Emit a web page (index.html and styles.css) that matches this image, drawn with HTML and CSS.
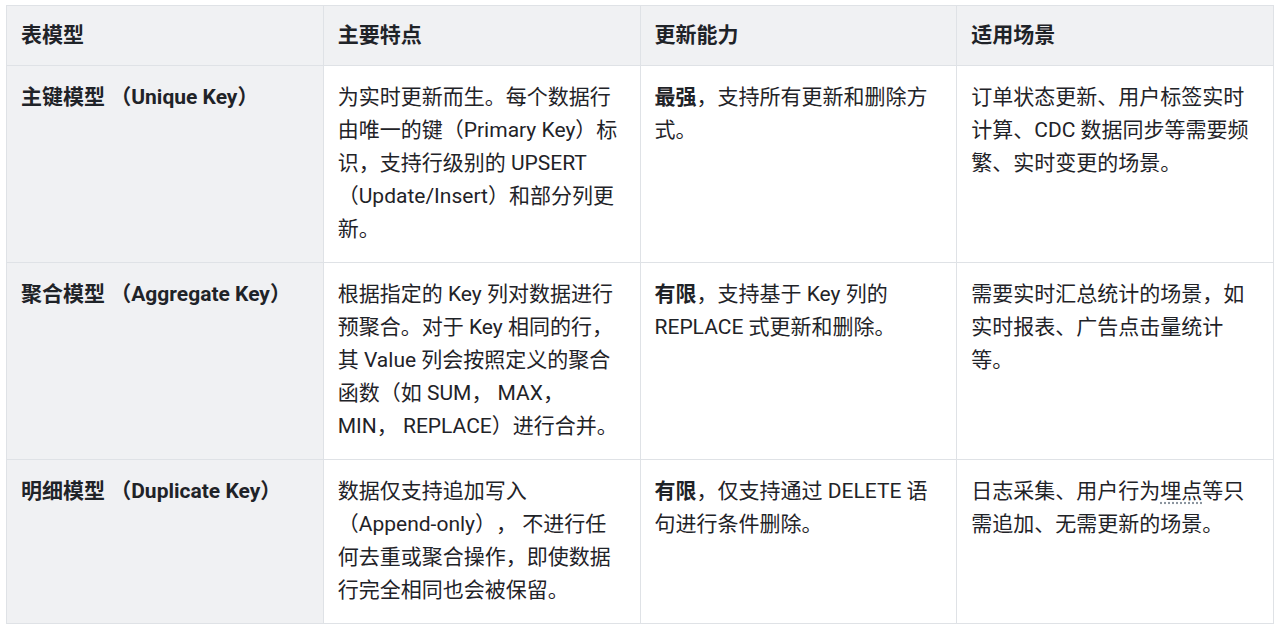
FILE: index.html
```html
<!DOCTYPE html>
<html lang="zh-CN">
<head>
<meta charset="utf-8">
<title>表模型</title>
<link rel="stylesheet" href="styles.css">
</head>
<body>
<div class="wrap">
<table class="models">
  <thead>
    <tr>
      <th>表模型</th>
      <th>主要特点</th>
      <th>更新能力</th>
      <th>适用场景</th>
    </tr>
  </thead>
  <tbody>
    <tr>
      <td class="name">主键模型 （Unique Key）</td>
      <td>为实时更新而生。每个数据行由唯一的键（Primary Key）标识，支持行级别的 UPSERT （Update/Insert）和部分列更新。</td>
      <td><strong>最强</strong>，支持所有更新和删除方式。</td>
      <td>订单状态更新、用户标签实时计算、CDC 数据同步等需要频繁、实时变更的场景。</td>
    </tr>
    <tr>
      <td class="name">聚合模型 （Aggregate Key）</td>
      <td>根据指定的 Key 列对数据进行预聚合。对于 Key 相同的行，其 Value 列会按照定义的聚合函数（如 SUM， MAX， MIN， REPLACE）进行合并。</td>
      <td><strong>有限</strong>，支持基于 Key 列的 REPLACE 式更新和删除。</td>
      <td>需要实时汇总统计的场景，如实时报表、广告点击量统计等。</td>
    </tr>
    <tr>
      <td class="name">明细模型 （Duplicate Key）</td>
      <td>数据仅支持追加写入 （Append-only）， 不进行任何去重或聚合操作，即使数据行完全相同也会被保留。</td>
      <td><strong>有限</strong>，仅支持通过 DELETE 语句进行条件删除。</td>
      <td>日志采集、用户行为<span class="term">埋点</span>等只需追加、无需更新的场景。</td>
    </tr>
  </tbody>
</table>
</div>
</body>
</html>
```
FILE: styles.css
```css
html, body {
  margin: 0;
  padding: 0;
  background: #ffffff;
}
body {
  font-family: "Roboto", "Noto Sans CJK SC", sans-serif;
  color: #1f2328;
  font-size: 21px;
  line-height: 33px;
  text-spacing-trim: space-all;
}
.wrap {
  padding: 5px 6px;
}
.models {
  width: 100%;
  border-collapse: collapse;
  table-layout: fixed;
}
.models th,
.models td {
  border: 1px solid #dfe2e6;
  text-align: left;
  vertical-align: top;
  padding: 15px 14px 16px;
}
.models th {
  background: #f0f1f3;
  font-weight: 700;
  padding: 13px 14px 13px;
}
.models td.name {
  background: #f0f1f3;
  font-weight: 700;
}
.models strong {
  font-weight: 700;
}
.term {
  text-decoration: underline dotted #8c959f;
  text-underline-offset: 4px;
}
```
